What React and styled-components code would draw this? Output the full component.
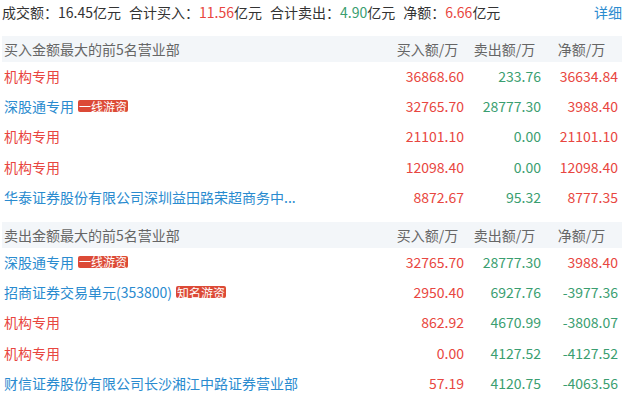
import React from 'react';
import styled, { createGlobalStyle } from 'styled-components';

const GlobalStyle = createGlobalStyle`
  body {
    margin: 0;
    background: #fff;
    font-family: "Microsoft YaHei", "Noto Sans CJK SC", "Noto Sans", sans-serif;
  }
`;

const RED = '#e84640';
const GREEN = '#3a9e70';
const BLUE = '#2a8bcf';

const Page = styled.div`
  width: 628px;
  padding: 0 6px 0 2px;
  box-sizing: border-box;
  font-size: 14px;
`;

const Summary = styled.div`
  display: flex;
  align-items: center;
  height: 24px;
  margin-bottom: 12px;
  color: #333;
  white-space: nowrap;
`;

const SummaryItem = styled.span`
  margin-right: 8px;
`;

const Value = styled.span`
  color: ${p => p.color};
`;

const DetailLink = styled.a`
  margin-left: auto;
  color: ${BLUE};
  text-decoration: none;
  cursor: pointer;
`;

const Section = styled.div`
  margin-bottom: 8px;
`;

const Grid = styled.div`
  display: grid;
  grid-template-columns: 1fr 77px 77px 77px;
  align-items: center;
  padding: 0 4px 0 2px;
  box-sizing: border-box;
`;

const HeaderRow = styled(Grid)`
  height: 26px;
  background: #f3f6f9;
  color: #666;
`;

const HeadCell = styled.div`
  text-align: ${p => (p.$left ? 'left' : 'center')};
  padding-left: ${p => (p.$left ? 0 : 4)}px;
  white-space: nowrap;
`;

const Row = styled(Grid)`
  height: 30.4px;
  padding-bottom: 3px;
`;

const Name = styled.div`
  display: flex;
  align-items: center;
  color: ${p => p.color};
  white-space: nowrap;
  overflow: hidden;
`;

const Badge = styled.span`
  display: inline-flex;
  align-items: center;
  margin-left: 4px;
  padding: 0 1px;
  height: 12px;
  font-size: 12px;
  color: #fff;
  background: #dc4a36;
  border-radius: 2px;
`;

const Num = styled.div`
  text-align: right;
  color: ${p => p.color};
  white-space: nowrap;
`;

const tone = v => (parseFloat(v) < 0 ? GREEN : RED);

const buyRows = [
  { name: '机构专用', inst: true, buy: '36868.60', sell: '233.76', net: '36634.84' },
  { name: '深股通专用', badge: '一线游资', buy: '32765.70', sell: '28777.30', net: '3988.40' },
  { name: '机构专用', inst: true, buy: '21101.10', sell: '0.00', net: '21101.10' },
  { name: '机构专用', inst: true, buy: '12098.40', sell: '0.00', net: '12098.40' },
  { name: '华泰证券股份有限公司深圳益田路荣超商务中...', buy: '8872.67', sell: '95.32', net: '8777.35' },
];

const sellRows = [
  { name: '深股通专用', badge: '一线游资', buy: '32765.70', sell: '28777.30', net: '3988.40' },
  { name: '招商证券交易单元(353800)', badge: '知名游资', buy: '2950.40', sell: '6927.76', net: '-3977.36' },
  { name: '机构专用', inst: true, buy: '862.92', sell: '4670.99', net: '-3808.07' },
  { name: '机构专用', inst: true, buy: '0.00', sell: '4127.52', net: '-4127.52' },
  { name: '财信证券股份有限公司长沙湘江中路证券营业部', buy: '57.19', sell: '4120.75', net: '-4063.56' },
];

function Table({ title, rows }) {
  return (
    <Section>
      <HeaderRow>
        <HeadCell $left>{title}</HeadCell>
        <HeadCell>买入额/万</HeadCell>
        <HeadCell>卖出额/万</HeadCell>
        <HeadCell>净额/万</HeadCell>
      </HeaderRow>
      {rows.map((r, i) => (
        <Row key={i}>
          <Name color={r.inst ? RED : BLUE}>
            {r.name}
            {r.badge && <Badge>{r.badge}</Badge>}
          </Name>
          <Num color={RED}>{r.buy}</Num>
          <Num color={GREEN}>{r.sell}</Num>
          <Num color={tone(r.net)}>{r.net}</Num>
        </Row>
      ))}
    </Section>
  );
}

export default function App() {
  return (
    <Page>
      <GlobalStyle />
      <Summary>
        <SummaryItem>成交额：<Value color="#333">16.45</Value>亿元</SummaryItem>
        <SummaryItem>合计买入：<Value color={RED}>11.56</Value>亿元</SummaryItem>
        <SummaryItem>合计卖出：<Value color={GREEN}>4.90</Value>亿元</SummaryItem>
        <SummaryItem>净额：<Value color={RED}>6.66</Value>亿元</SummaryItem>
        <DetailLink>详细</DetailLink>
      </Summary>
      <Table title="买入金额最大的前5名营业部" rows={buyRows} />
      <Table title="卖出金额最大的前5名营业部" rows={sellRows} />
    </Page>
  );
}
